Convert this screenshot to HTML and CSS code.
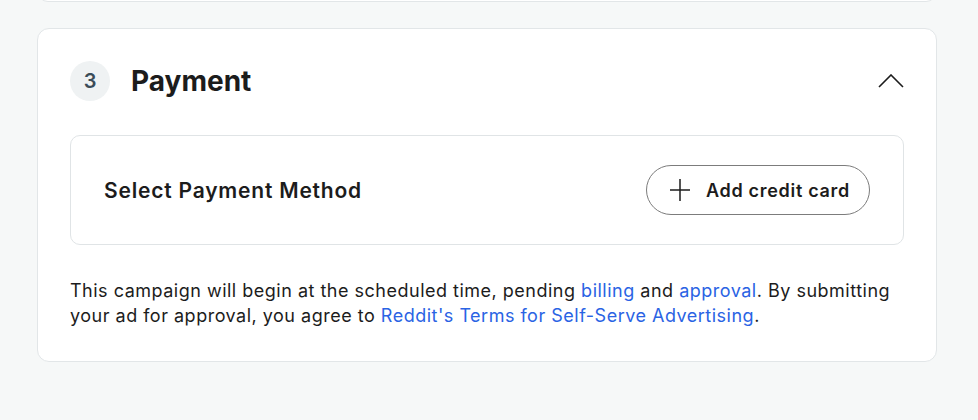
FILE: index.html
```html
<!DOCTYPE html>
<html lang="en">
<head>
    <meta charset="UTF-8">
    <meta name="viewport" content="width=device-width, initial-scale=1.0">
    <title>Payment</title>
    <link rel="stylesheet" href="styles.css">
</head>
<body>
    <div class="card card-prev"></div>
    <div class="card">
        <div class="head">
            <span class="step">3</span>
            <h2 class="title">Payment</h2>
            <svg class="chevron" width="26" height="14" viewBox="0 0 26 14">
                <path d="M1 13 L13 1 L25 13" fill="none" stroke="#1c1c1c" stroke-width="1.6"/>
            </svg>
        </div>
        <div class="method">
            <span class="method-label">Select Payment Method</span>
            <button class="add-btn">
                <svg width="20" height="22" viewBox="0 0 20 22">
                    <path d="M10 0 V22 M0 11 H20" stroke="#1c1c1c" stroke-width="1.5"/>
                </svg>
                Add credit card
            </button>
        </div>
        <p class="note">This campaign will begin at the scheduled time, pending <a href="#">billing</a> and <a href="#">approval</a>. By submitting your ad for approval, you agree to <a href="#">Reddit's Terms for Self-Serve Advertising</a>.</p>
    </div>
</body>
</html>
```

FILE: styles.css
```css
body{
    margin: 0;
    background-color: #f6f8f8;
    font-family: Inter, "Noto Sans", sans-serif;
    color: #1c1c1c;
}
.card{
    margin: 0 41px 0 37px;
    background-color: #fff;
    border: 1px solid #e2e6e8;
    border-radius: 12px;
    padding: 32px 32px 33px;
}
.card-prev{
    height: 20px;
    margin-top: -20px;
    margin-bottom: 26px;
    padding: 0;
}
.head{
    display: flex;
    align-items: center;
    height: 40px;
}
.step{
    width: 40px;
    height: 40px;
    border-radius: 50%;
    background-color: #eff2f3;
    color: #3b4c58;
    font-size: 20px;
    font-weight: 600;
    display: flex;
    justify-content: center;
    align-items: center;
}
.title{
    margin: 0 0 0 21px;
    font-size: 28px;
    font-weight: 700;
    flex: 1;
}
.method{
    margin-top: 34px;
    border: 1px solid #e0e4e6;
    border-radius: 10px;
    height: 108px;
    display: flex;
    align-items: center;
    justify-content: space-between;
    padding: 0 33px;
}
.method-label{
    font-size: 21px;
    font-weight: 600;
    letter-spacing: 0.8px;
}
.add-btn{
    height: 50px;
    padding: 0 19px 0 23px;
    border: 1px solid #7c7c7c;
    border-radius: 25px;
    background-color: #fff;
    font-family: inherit;
    font-size: 18px;
    font-weight: 600;
    letter-spacing: 0.7px;
    color: #1c1c1c;
    display: flex;
    align-items: center;
    gap: 16px;
}
.note{
    margin: 33px 0 0;
    font-size: 18px;
    line-height: 25px;
    letter-spacing: 0.5px;
}
.note a{
    color: #2a63e4;
    text-decoration: none;
}
```
